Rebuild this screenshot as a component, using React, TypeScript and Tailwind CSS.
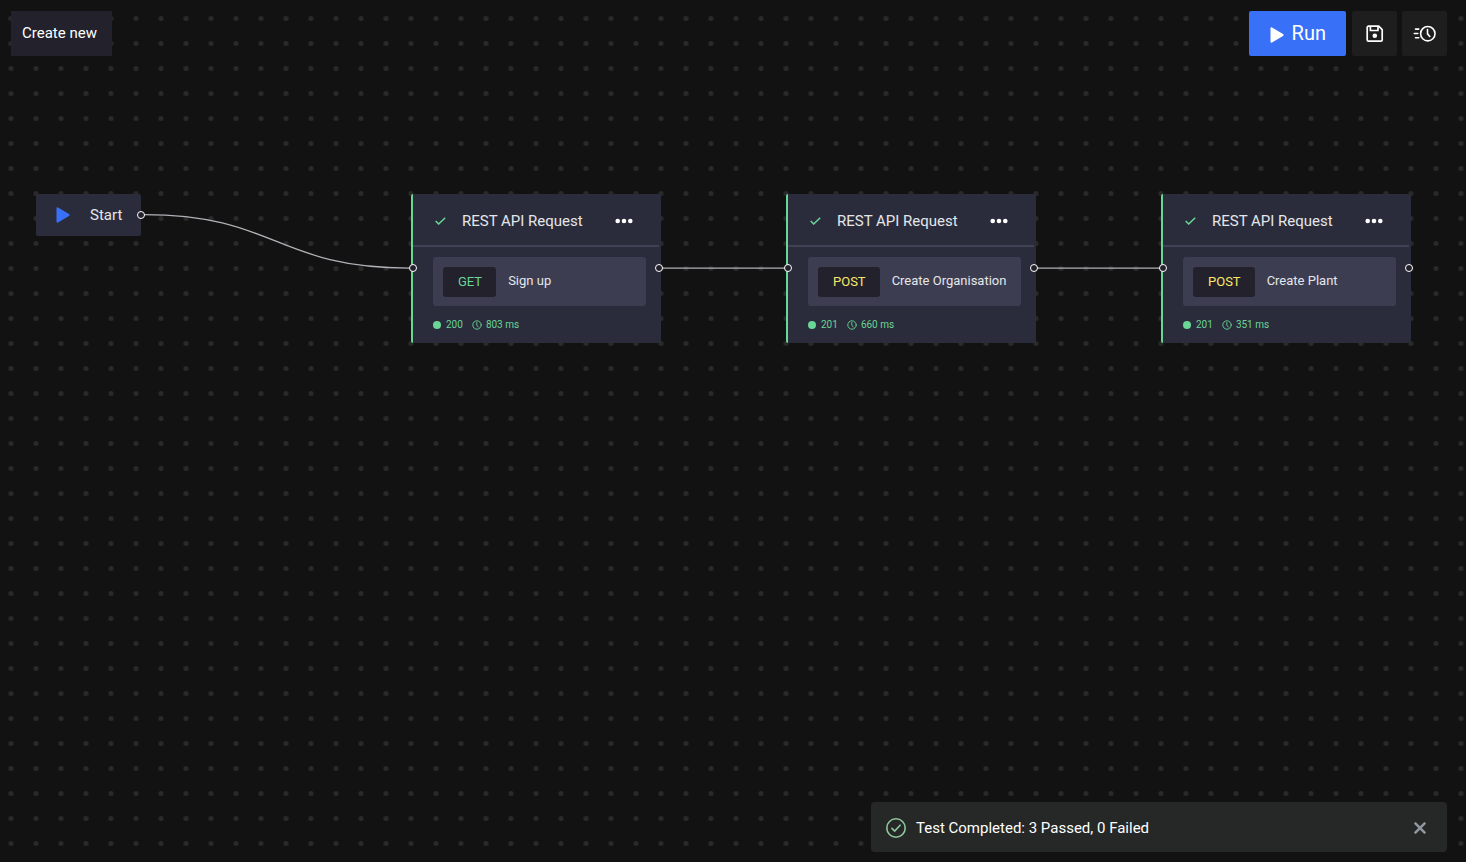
const requests = [
    { id: 1, x: "left-[411px]", method: "GET", color: "text-[#69d696]", name: "Sign up", status: 200, time: "803 ms", next: true },
    { id: 2, x: "left-[786px]", method: "POST", color: "text-[#fae768]", name: "Create Organisation", status: 201, time: "660 ms", next: true },
    { id: 3, x: "left-[1161px]", method: "POST", color: "text-[#fae768]", name: "Create Plant", status: 201, time: "351 ms", next: false },
];

// one path per connection, in canvas coordinates
const edges = [
    "M144 214.500 C276 214.500 276 268 409 268",
    "M662 268 H786",
    "M1037 268 H1161",
];

const PlayIcon = ({ className }: { className: string }) => (
    <svg className={className} viewBox="0 0 14 16" fill="currentColor" aria-hidden="true">
        <path d="M.500 1.500 Q.500 -.200 2 .600 L13 7.100 Q14.200 8 13 8.900 L2 15.400 Q.500 16.200 .500 14.500 Z" />
    </svg>
);

const SaveIcon = () => (
    <svg className="size-[18px]" viewBox="0 0 18 18" fill="none" stroke="currentColor" strokeWidth="1.700" strokeLinejoin="round" aria-hidden="true">
        <path d="M2.500 1.200 H12.700 L16.200 4.700 V14.900 A1.300 1.300 0 0 1 14.900 16.200 H2.500 A1.300 1.300 0 0 1 1.200 14.900 V2.500 A1.300 1.300 0 0 1 2.500 1.200 Z" />
        <path d="M4.400 1.200 V5.500 H12 V1.200" />
        <circle cx="8.800" cy="10.800" r="2.300" fill="currentColor" stroke="none" />
    </svg>
);

const HistoryIcon = () => (
    <svg className="h-[18px] w-6" viewBox="0 0 24 18" fill="none" stroke="currentColor" strokeWidth="1.600" strokeLinecap="round" aria-hidden="true">
        <circle cx="14.800" cy="8.700" r="7.200" />
        <path d="M14.500 4.600 V8.900 L16.800 11.500" />
        <path d="M2.500 4.100 H5.800 M1.300 8.500 H4.800 M2.500 12.800 H5.800" />
    </svg>
);

const ClockIcon = () => (
    <svg className="size-[10px]" viewBox="0 0 10 10" fill="none" stroke="currentColor" strokeWidth="0.900" strokeLinecap="round" aria-hidden="true">
        <circle cx="5" cy="5" r="4.200" />
        <path d="M4.800 2.500 V5.200 L6.200 7" />
    </svg>
);

const Handle = ({ className }: { className: string }) => (
    <span className={`absolute size-2 rounded-full border border-white bg-[#22212c] ${className}`} />
);

const App = () => {
    return (
        <main className="relative min-h-screen overflow-hidden bg-[#121212] font-['Roboto',sans-serif] text-white">
            <svg className="absolute inset-0 h-full w-full" aria-hidden="true">
                <defs>
                    <pattern id="dots" x="-1.500" y="6" width="25" height="25" patternUnits="userSpaceOnUse">
                        <circle cx="12.500" cy="12.500" r="2.500" fill="#2a2a2a" />
                    </pattern>
                </defs>
                <rect width="100%" height="100%" fill="url(#dots)" />
                {edges.map((d) => (
                    <path key={d} d={d} fill="none" stroke="#b1b1b7" strokeWidth="1.250" />
                ))}
            </svg>

            <header className="relative flex items-start justify-between pt-[11px] pr-[19px] pl-[11px]">
                <button className="h-[45px] bg-[#22212c] pr-[15px] pl-[11px] text-[15px]">
                    Create new
                </button>
                <div className="flex gap-[5px]">
                    <button className="mr-px flex h-[45px] items-center gap-2 rounded-xs bg-[#3870f8] pr-5 pb-0.5 pl-[21px] text-xl">
                        <PlayIcon className="mt-1 h-4 w-[14px]" />
                        Run
                    </button>
                    <button aria-label="Save" className="flex size-[45px] items-center justify-center rounded-xs bg-[#1e1e1e]">
                        <SaveIcon />
                    </button>
                    <button aria-label="History" className="flex size-[45px] items-center justify-center rounded-xs bg-[#1e1e1e]">
                        <HistoryIcon />
                    </button>
                </div>
            </header>

            {/* Start node */}
            <div className="absolute top-[194px] left-9 flex h-[42px] w-[105px] items-center rounded-xs bg-[#2b2c3b] pl-5 text-[15px] text-[#e4e6ea]">
                <PlayIcon className="h-4 w-[14px] text-[#3870f8]" />
                <span className="ml-5">Start</span>
                <Handle className="top-[17px] -right-1" />
            </div>

            {requests.map((item) => (
                <div
                    key={item.id}
                    className={`absolute top-[194px] w-[250px] rounded-xs border-l-2 border-[#69d696] bg-[#2b2c3b] pb-[11px] ${item.x}`}>
                    <div className="mr-0.5 flex h-[53px] items-center border-b-2 border-[#3f4155] pt-[3px] pl-[22px]">
                        <svg className="h-2 w-[11px] text-[#69d696]" viewBox="0 0 11 8" fill="none" stroke="currentColor" strokeWidth="1.500" aria-hidden="true">
                            <path d="M.700 4 L3.700 7 L10.200 .700" />
                        </svg>
                        <h2 className="ml-4 text-[15px] text-[#e4e6ea]">REST API Request</h2>
                        <button aria-label="More options" className="mr-[26px] ml-auto">
                            <svg className="h-[6px] w-[18px]" viewBox="0 0 18 6" fill="currentColor" aria-hidden="true">
                                <circle cx="2.700" cy="3" r="2.300" />
                                <circle cx="9" cy="3" r="2.300" />
                                <circle cx="15.300" cy="3" r="2.300" />
                            </svg>
                        </button>
                    </div>
                    <div className="mt-[10px] mr-[15px] ml-5 flex h-[49px] items-center rounded-[3px] bg-[#3c3d50] pl-[10px] text-[13px]">
                        <span className={`flex h-[30px] items-center rounded-[3px] bg-[#22212c] pr-[14px] pl-[15px] ${item.color}`}>
                            {item.method}
                        </span>
                        <span className="ml-3 pb-0.5 text-[#e4e6ea]">{item.name}</span>
                    </div>
                    <div className="mt-[11px] ml-5 flex h-[15px] items-center text-[10px] text-[#69d696]">
                        <span className="size-2 rounded-full bg-[#69d696]" />
                        <span className="ml-[5px]">{item.status}</span>
                        <span className="ml-[9px] flex items-center gap-1">
                            <ClockIcon />
                            {item.time}
                        </span>
                    </div>
                    <Handle className="top-[70px] -left-1" />
                    <Handle className="top-[70px] -right-0.5" />
                </div>
            ))}

            {/* Result toast */}
            <div role="status" className="absolute right-[19px] bottom-[10px] flex h-[50px] w-[576px] items-center rounded-sm bg-[#262827] px-[15px] pt-0.5 text-[15px]">
                <svg className="size-5 text-[#8fc79c]" viewBox="0 0 20 20" fill="none" stroke="currentColor" strokeWidth="1.600" strokeLinecap="round" aria-hidden="true">
                    <circle cx="10" cy="10" r="9.200" />
                    <path d="M5.900 10.300 L8.700 13 L14.100 7.200" />
                </svg>
                <p className="ml-[10px]">Test Completed: 3 Passed, 0 Failed</p>
                <button aria-label="Close" className="mr-[6px] ml-auto text-[#8f979f]">
                    <svg className="size-3" viewBox="0 0 12 12" fill="none" stroke="currentColor" strokeWidth="2.500" aria-hidden="true">
                        <path d="M.700 .700 L11.300 11.300 M11.300 .700 L.700 11.300" />
                    </svg>
                </button>
            </div>
        </main>
    );
};

export default App;
